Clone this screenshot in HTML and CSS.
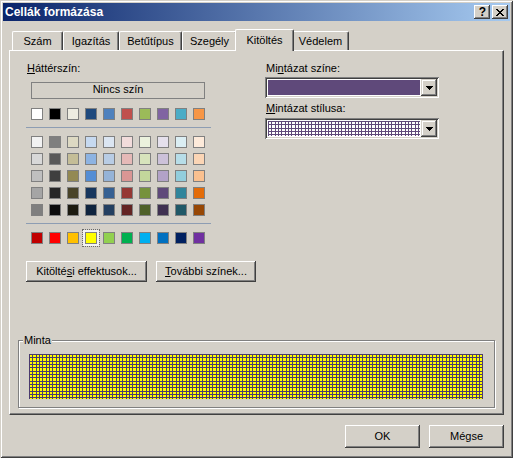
FILE: index.html
```html
<!DOCTYPE html>
<html lang="hu">
<head>
<meta charset="utf-8">
<title>Cellák formázása</title>
<link rel="stylesheet" href="styles.css">
</head>
<body>
<div class="win">
  <div class="titlebar">
    <span class="title">Cellák formázása</span>
    <div class="capbtns">
      <span class="capbtn help">?</span>
      <span class="capbtn close">
        <svg width="8" height="7" viewBox="0 0 8 7" shape-rendering="crispEdges">
          <rect x="0" y="0" width="2" height="1"/><rect x="6" y="0" width="2" height="1"/>
          <rect x="1" y="1" width="2" height="1"/><rect x="5" y="1" width="2" height="1"/>
          <rect x="2" y="2" width="4" height="1"/>
          <rect x="3" y="3" width="2" height="1"/>
          <rect x="2" y="4" width="4" height="1"/>
          <rect x="1" y="5" width="2" height="1"/><rect x="5" y="5" width="2" height="1"/>
          <rect x="0" y="6" width="2" height="1"/><rect x="6" y="6" width="2" height="1"/>
        </svg>
      </span>
    </div>
  </div>
  <div class="content">
    <div class="tabs">
      <div class="tab t-szam">Szám</div>
      <div class="tab t-igaz">Igazítás</div>
      <div class="tab t-betu">Betűtípus</div>
      <div class="tab t-szeg">Szegély</div>
      <div class="tab t-kit sel">Kitöltés</div>
      <div class="tab t-ved">Védelem</div>
    </div>
    <div class="panel">
      <div class="cols">
        <div class="left">
          <div class="lbl"><u>H</u>áttérszín:</div>
          <div class="nocolor">Nincs szín</div>
          <div class="swrow top">
            <span class="sw" style="background:#FFFFFF"></span>
            <span class="sw" style="background:#000000"></span>
            <span class="sw" style="background:#EEECE1"></span>
            <span class="sw" style="background:#1F497D"></span>
            <span class="sw" style="background:#4F81BD"></span>
            <span class="sw" style="background:#C0504D"></span>
            <span class="sw" style="background:#9BBB59"></span>
            <span class="sw" style="background:#8064A2"></span>
            <span class="sw" style="background:#4BACC6"></span>
            <span class="sw" style="background:#F79646"></span>
          </div>
          <div class="sep"></div>
          <div class="swgrid">
            <div class="swrow">
              <span class="sw" style="background:#F2F2F2"></span>
              <span class="sw" style="background:#7F7F7F"></span>
              <span class="sw" style="background:#DDD9C3"></span>
              <span class="sw" style="background:#C6D9F0"></span>
              <span class="sw" style="background:#DBE5F1"></span>
              <span class="sw" style="background:#F2DCDB"></span>
              <span class="sw" style="background:#EBF1DD"></span>
              <span class="sw" style="background:#E5E0EC"></span>
              <span class="sw" style="background:#DBEEF3"></span>
              <span class="sw" style="background:#FDEADA"></span>
            </div>
            <div class="swrow">
              <span class="sw" style="background:#D8D8D8"></span>
              <span class="sw" style="background:#595959"></span>
              <span class="sw" style="background:#C4BD97"></span>
              <span class="sw" style="background:#8DB3E2"></span>
              <span class="sw" style="background:#B8CCE4"></span>
              <span class="sw" style="background:#E5B9B7"></span>
              <span class="sw" style="background:#D7E3BC"></span>
              <span class="sw" style="background:#CCC1D9"></span>
              <span class="sw" style="background:#B7DDE8"></span>
              <span class="sw" style="background:#FBD5B5"></span>
            </div>
            <div class="swrow">
              <span class="sw" style="background:#BFBFBF"></span>
              <span class="sw" style="background:#3F3F3F"></span>
              <span class="sw" style="background:#938953"></span>
              <span class="sw" style="background:#548DD4"></span>
              <span class="sw" style="background:#95B3D7"></span>
              <span class="sw" style="background:#D99694"></span>
              <span class="sw" style="background:#C3D69B"></span>
              <span class="sw" style="background:#B2A2C7"></span>
              <span class="sw" style="background:#92CDDC"></span>
              <span class="sw" style="background:#FAC08F"></span>
            </div>
            <div class="swrow">
              <span class="sw" style="background:#A5A5A5"></span>
              <span class="sw" style="background:#262626"></span>
              <span class="sw" style="background:#494429"></span>
              <span class="sw" style="background:#17365D"></span>
              <span class="sw" style="background:#366092"></span>
              <span class="sw" style="background:#953734"></span>
              <span class="sw" style="background:#76923C"></span>
              <span class="sw" style="background:#5F497A"></span>
              <span class="sw" style="background:#31859B"></span>
              <span class="sw" style="background:#E36C09"></span>
            </div>
            <div class="swrow">
              <span class="sw" style="background:#7F7F7F"></span>
              <span class="sw" style="background:#0C0C0C"></span>
              <span class="sw" style="background:#1D1B10"></span>
              <span class="sw" style="background:#0F243E"></span>
              <span class="sw" style="background:#244061"></span>
              <span class="sw" style="background:#632423"></span>
              <span class="sw" style="background:#4F6128"></span>
              <span class="sw" style="background:#3F3151"></span>
              <span class="sw" style="background:#205867"></span>
              <span class="sw" style="background:#974806"></span>
            </div>
          </div>
          <div class="sep"></div>
          <div class="swrow std">
            <span class="sw" style="background:#C00000"></span>
            <span class="sw" style="background:#FF0000"></span>
            <span class="sw" style="background:#FFC000"></span>
            <span class="sw sel" style="background:#FFFF00"></span>
            <span class="sw" style="background:#92D050"></span>
            <span class="sw" style="background:#00B050"></span>
            <span class="sw" style="background:#00B0F0"></span>
            <span class="sw" style="background:#0070C0"></span>
            <span class="sw" style="background:#002060"></span>
            <span class="sw" style="background:#7030A0"></span>
          </div>
        </div>
        <div class="right">
          <div class="lbl">Mi<u>n</u>tázat színe:</div>
          <div class="combo">
            <div class="combo-val purple"></div>
            <div class="combo-arrow">
              <svg width="7" height="4" viewBox="0 0 7 4" shape-rendering="crispEdges">
                <rect x="0" y="0" width="7" height="1"/><rect x="1" y="1" width="5" height="1"/>
                <rect x="2" y="2" width="3" height="1"/><rect x="3" y="3" width="1" height="1"/>
              </svg>
            </div>
          </div>
          <div class="lbl lbl2"><u>M</u>intázat stílusa:</div>
          <div class="combo combo2">
            <div class="combo-val gridpat"></div>
            <div class="combo-arrow">
              <svg width="7" height="4" viewBox="0 0 7 4" shape-rendering="crispEdges">
                <rect x="0" y="0" width="7" height="1"/><rect x="1" y="1" width="5" height="1"/>
                <rect x="2" y="2" width="3" height="1"/><rect x="3" y="3" width="1" height="1"/>
              </svg>
            </div>
          </div>
        </div>
      </div>
      <div class="btnrow">
        <div class="btn b-eff">Kitölté<u>s</u>i effektusok...</div>
        <div class="btn b-more"><u>T</u>ovábbi színek...</div>
      </div>
      <div class="group">
        <span class="group-label">Minta</span>
        <div class="sample"></div>
      </div>
    </div>
    <div class="footer">
      <div class="btn b-ok">OK</div>
      <div class="btn b-ok">Mégse</div>
    </div>
  </div>
</div>
</body>
</html>
```

FILE: styles.css
```css
html, body {
  margin: 0;
  padding: 0;
  background: #d4d0c8;
}
body {
  font-family: "Liberation Sans", Arial, sans-serif;
  font-size: 11px;
  color: #000;
}
u { text-decoration: underline; text-underline-offset: 1px; }

.win {
  width: 513px;
  height: 458px;
  box-sizing: border-box;
  padding: 3px;
  background: #d4d0c8;
  box-shadow: inset 1px 1px 0 #d4d0c8, inset -1px -1px 0 #404040,
              inset 2px 2px 0 #ffffff, inset -2px -2px 0 #808080;
}

.titlebar {
  height: 18px;
  display: flex;
  align-items: center;
  justify-content: space-between;
  background: linear-gradient(to right, #0a246a, #a6caf0);
}
.title {
  color: #fff;
  font-weight: bold;
  font-size: 12px;
  line-height: 18px;
  padding-left: 2px;
}
.capbtns {
  display: flex;
  gap: 2px;
  margin-right: 2px;
}
.capbtn {
  width: 16px;
  height: 14px;
  box-sizing: border-box;
  background: #d4d0c8;
  display: flex;
  align-items: center;
  justify-content: center;
  box-shadow: inset -1px -1px 0 #404040, inset 1px 1px 0 #ffffff,
              inset -2px -2px 0 #808080;
}
.capbtn.help {
  font-weight: bold;
  font-size: 12px;
  line-height: 14px;
  padding-left: 1px;
}
.capbtn svg { display: block; fill: #000; margin-left: 0; }

.content {
  padding: 8px 0 0 6px;
}

.tabs {
  display: flex;
  align-items: flex-end;
  height: 21px;
  margin-left: 3px;
  position: relative;
  z-index: 2;
}
.tab {
  box-sizing: border-box;
  height: 19px;
  border-top: 1px solid #ffffff;
  border-left: 1px solid #ffffff;
  border-right: 1px solid #404040;
  border-radius: 2px 2px 0 0;
  box-shadow: inset -1px 0 0 #808080;
  text-align: center;
  padding-top: 3px;
  line-height: 13px;
  white-space: nowrap;
  background: #d4d0c8;
}
.tab.sel {
  height: 22px;
  margin: 0 -2px -1px;
  padding-top: 4px;
  position: relative;
  z-index: 1;
}
.t-szam { width: 51px; }
.t-igaz { width: 56px; }
.t-betu { width: 63px; }
.t-szeg { width: 55px; }
.t-kit  { width: 59px; }
.t-ved  { width: 57px; }

.panel {
  width: 495px;
  height: 365px;
  box-sizing: border-box;
  border-top: 1px solid #ffffff;
  border-left: 1px solid #ffffff;
  border-right: 1px solid #404040;
  border-bottom: 1px solid #404040;
  box-shadow: inset -1px -1px 0 #808080;
  padding-top: 11px;
}

.cols {
  display: flex;
  margin-left: 16px;
}
.left { width: 185px; }
.right { width: 174px; margin-left: 54px; }

.lbl {
  line-height: 13px;
  padding-left: 1px;
  white-space: nowrap;
}
.lbl2 { margin-top: 4px; }

.nocolor {
  margin: 7px 0 0 5px;
  width: 174px;
  height: 17px;
  box-sizing: border-box;
  border: 1px solid #808080;
  text-align: center;
  line-height: 13px;
}

.swrow {
  display: flex;
  gap: 6px;
  margin-left: 5px;
}
.swrow.top { margin-top: 9px; }
.swrow.std { margin-top: 8px; }
.sw {
  width: 12px;
  height: 12px;
  box-sizing: border-box;
  border: 1px solid #808080;
  display: block;
}
.sw.sel {
  box-shadow: 0 0 0 2px #f4f4f4;
  outline: 1px dotted #6a6a6a;
  outline-offset: 2px;
}
.sep {
  height: 1px;
  background: #8d9db3;
  margin-top: 7px;
}
.swgrid {
  display: flex;
  flex-direction: column;
  gap: 5px;
  margin-top: 8px;
}
.swgrid .swrow { margin-left: 5px; }

.combo {
  margin-top: 2px;
  height: 21px;
  box-sizing: border-box;
  padding: 2px;
  display: flex;
  background: #ffffff;
  box-shadow: inset 1px 1px 0 #808080, inset -1px -1px 0 #ffffff,
              inset 2px 2px 0 #404040, inset -2px -2px 0 #d4d0c8;
}
.combo2 { margin-top: 3px; }
.combo-val {
  flex: 1;
  margin: 1px;
}
.purple { background: #5f497a; }
.gridpat {
  background-color: #ffffff;
  background-image:
    linear-gradient(to right, #5f497a 0 1px, transparent 1px 3px, #5f497a 3px 4px, transparent 4px 7px, #5f497a 7px 8px, transparent 8px),
    linear-gradient(to bottom, #5f497a 0 1px, transparent 1px 3px, #5f497a 3px 4px, transparent 4px 7px, #5f497a 7px 8px, transparent 8px);
  background-size: 10px 10px;
}
.combo-arrow {
  width: 16px;
  height: 17px;
  box-sizing: border-box;
  background: #d4d0c8;
  display: flex;
  align-items: center;
  justify-content: center;
  box-shadow: inset -1px -1px 0 #404040, inset 1px 1px 0 #d4d0c8,
              inset -2px -2px 0 #808080, inset 2px 2px 0 #ffffff;
}
.combo-arrow svg { display: block; fill: #000; }

.btnrow {
  display: flex;
  gap: 9px;
  margin: 17px 0 0 16px;
}
.btn {
  box-sizing: border-box;
  height: 21px;
  background: #d4d0c8;
  text-align: center;
  line-height: 13px;
  padding-top: 4px;
  white-space: nowrap;
  box-shadow: inset -1px -1px 0 #404040, inset 1px 1px 0 #ffffff,
              inset -2px -2px 0 #808080, inset 2px 2px 0 #d4d0c8;
}
.b-eff { width: 121px; }
.b-more { width: 100px; }

.group {
  position: relative;
  margin: 58px 8px 0;
  height: 68px;
  box-sizing: border-box;
  border: 1px solid #808080;
  box-shadow: inset 1px 1px 0 #ffffff, 1px 1px 0 #ffffff;
  padding: 13px 0 0 10px;
}
.group-label {
  position: absolute;
  top: -7px;
  left: 4px;
  padding: 0 1px;
  background: #d4d0c8;
  line-height: 13px;
}
.sample {
  width: 454px;
  height: 45px;
  background-color: #ffff00;
  background-image:
    linear-gradient(to right, #4a3a6e 0 1px, transparent 1px 3px, #4a3a6e 3px 4px, transparent 4px 7px, #4a3a6e 7px 8px, transparent 8px),
    linear-gradient(to bottom, #4a3a6e 0 1px, transparent 1px 3px, #4a3a6e 3px 4px, transparent 4px 7px, #4a3a6e 7px 8px, transparent 8px);
  background-size: 10px 10px;
}

.footer {
  display: flex;
  justify-content: flex-end;
  gap: 9px;
  width: 495px;
  margin-top: 10px;
}
.b-ok {
  width: 75px;
  height: 23px;
  padding-top: 5px;
}
```
